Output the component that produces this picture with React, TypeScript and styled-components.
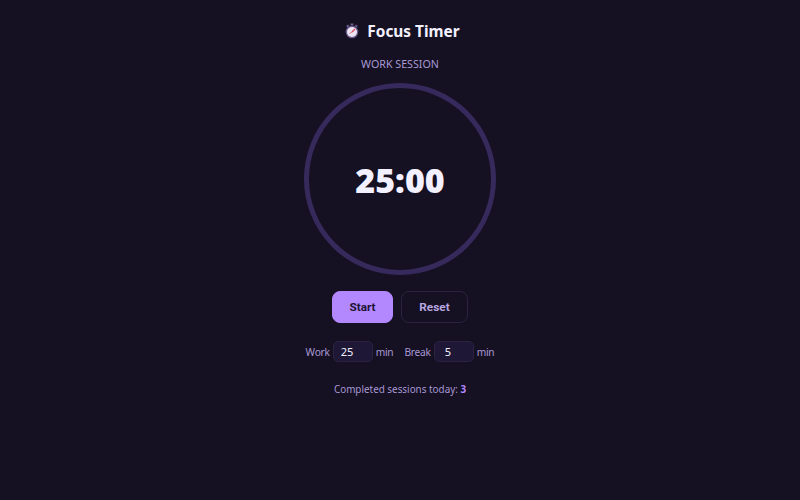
import styled, { createGlobalStyle } from 'styled-components';

const GlobalStyle = createGlobalStyle`
html, body {
    margin: 0;
    height: 100%;
    background: #151022;
}
`;

const Page = styled.div`
display: flex;
flex-direction: column;
align-items: center;
height: 500px;
padding-top: 20px;
box-sizing: border-box;
font-family: "Noto Sans", "Open Sans", sans-serif;
color: #b8a6e0;
`;

const Title = styled.h1`
display: flex;
align-items: center;
gap: 8px;
margin: 0;
height: 22px;
font-size: 15.4px;
font-weight: 700;
color: #f3f0ff;
svg {
    margin-left: 5px;
}
`;

const Label = styled.div`
margin-top: 14px;
height: 16px;
line-height: 16px;
font-size: 10.7px;
color: #a898d4;
`;

const Ring = styled.div`
display: flex;
align-items: center;
justify-content: center;
width: 192px;
height: 192px;
margin-top: 11px;
box-sizing: border-box;
border: 5px solid #362a5c;
border-radius: 50%;
`;

const Time = styled.div`
padding-top: 2px;
font-family: "Noto Sans", sans-serif;
font-size: 34px;
font-weight: 900;
color: #f3f0ff;
`;

const Buttons = styled.div`
display: flex;
gap: 8px;
margin-top: 16px;
`;

const Button = styled.button<{ $primary?: boolean }>`
width: ${p => (p.$primary ? '61px' : '67px')};
height: 32px;
padding: 0;
border-radius: 8px;
border: 1px solid ${p => (p.$primary ? '#b388ff' : '#2a2240')};
background: ${p => (p.$primary ? '#b388ff' : 'transparent')};
color: ${p => (p.$primary ? '#1e1436' : '#b8a6e0')};
font-family: "Roboto", "Liberation Sans", sans-serif;
font-size: 11.8px;
font-weight: 700;
`;

const Settings = styled.div`
display: flex;
align-items: center;
gap: 3px;
margin-top: 18px;
height: 21px;
font-size: 10.2px;
letter-spacing: -0.25px;
color: #a898d4;
`;

const Field = styled.input<{ $inset: number }>`
width: 40px;
height: 21px;
box-sizing: border-box;
padding: 0 0 0 ${p => p.$inset}px;
border: 1px solid #2a2240;
border-radius: 5px;
background: #1e1836;
color: #f3f0ff;
font-family: "Noto Sans", sans-serif;
font-size: 11px;
`;

const Unit = styled.span`
margin-right: 8px;
&:last-child {
    margin-right: 0;
}
`;

const Sessions = styled.div`
margin-top: 19px;
height: 16px;
line-height: 16px;
font-size: 9.9px;
color: #a898d4;
b {
    color: #b388ff;
}
`;

const StopwatchIcon = () => (
    <svg width = '14' height = '16' viewBox = '0 0 14 16' aria-hidden = 'true'>
        <rect x = '5.5' y = '0.5' width = '3' height = '2' fill = '#6a5a8c'/>
        <rect x = '1.5' y = '2' width = '2.5' height = '2' transform = 'rotate(-40 2.7 3)' fill = '#6a5a8c'/>
        <rect x = '10' y = '2' width = '2.5' height = '2' transform = 'rotate(40 11.2 3)' fill = '#6a5a8c'/>
        <circle cx = '7' cy = '9' r = '6.3' fill = '#6b5a8e'/>
        <circle cx = '7' cy = '9' r = '5' fill = '#ece6f2'/>
        <path d = 'M7 9 L10 6' stroke = '#e0405f' strokeWidth = '1.2'/>
        <path d = 'M7 9 L4.5 10.5' stroke = '#e0708f' strokeWidth = '1'/>
    </svg>
);

export default function App() {
    return (
        <Page>
            <GlobalStyle/>
            <Title><StopwatchIcon/>Focus Timer</Title>
            <Label>WORK SESSION</Label>
            <Ring><Time>25:00</Time></Ring>
            <Buttons>
                <Button $primary>Start</Button>
                <Button>Reset</Button>
            </Buttons>
            <Settings>
                <span>Work</span>
                <Field defaultValue = '25' $inset = {7}/>
                <Unit>min</Unit>
                <span>Break</span>
                <Field defaultValue = '5' $inset = {10}/>
                <Unit>min</Unit>
            </Settings>
            <Sessions>Completed sessions today: <b>3</b></Sessions>
        </Page>
    );
}
